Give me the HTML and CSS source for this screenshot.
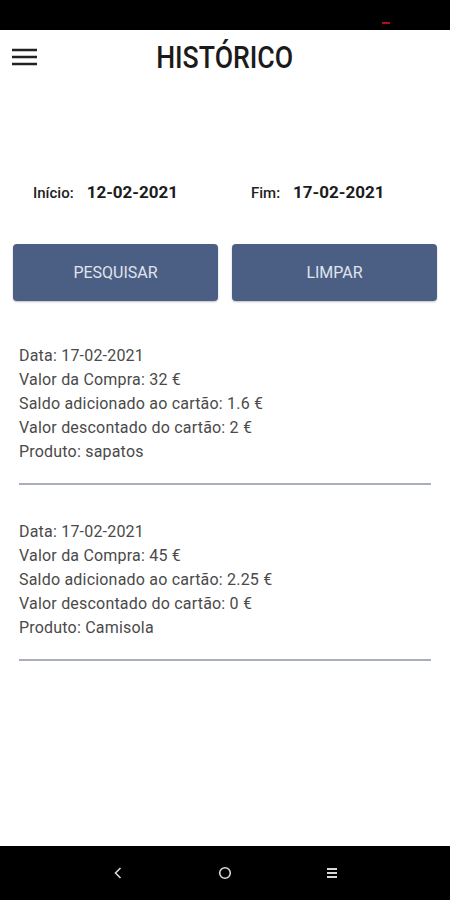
FILE: index.html
```html
<!DOCTYPE html>
<html lang="pt">
<head>
<meta charset="utf-8">
<title>Histórico</title>
<link rel="stylesheet" href="styles.css">
</head>
<body>
<div class="page">
  <div class="status"><span class="status-dot"></span></div>
  <header class="header">
    <button class="menu" aria-label="menu">
      <svg width="26" height="20" viewBox="0 0 26 20"><path d="M0 3h25M0 10h25M0 17h25" stroke="#222" stroke-width="2.6" fill="none"/></svg>
    </button>
    <h1 class="title">HISTÓRICO</h1>
    <span></span>
  </header>
  <main class="main">
    <div class="dates">
      <div class="date-item"><span class="label">Início:</span><span class="value">12-02-2021</span></div>
      <div class="date-item"><span class="label">Fim:</span><span class="value">17-02-2021</span></div>
    </div>
    <div class="buttons">
      <button class="btn">PESQUISAR</button>
      <button class="btn">LIMPAR</button>
    </div>
    <ul class="list">
      <li class="entry">
        <p>Data: 17-02-2021</p>
        <p>Valor da Compra: 32 €</p>
        <p>Saldo adicionado ao cartão: 1.6 €</p>
        <p>Valor descontado do cartão: 2 €</p>
        <p>Produto: sapatos</p>
        <hr class="divider">
      </li>
      <li class="entry">
        <p>Data: 17-02-2021</p>
        <p>Valor da Compra: 45 €</p>
        <p>Saldo adicionado ao cartão: 2.25 €</p>
        <p>Valor descontado do cartão: 0 €</p>
        <p>Produto: Camisola</p>
        <hr class="divider">
      </li>
    </ul>
  </main>
  <nav class="navbar">
    <svg width="12" height="14" viewBox="0 0 12 14"><path d="M8.5 2 3.5 7l5 5" stroke="#d8d8d8" stroke-width="1.6" fill="none"/></svg>
    <svg width="14" height="14" viewBox="0 0 14 14"><circle cx="7" cy="7" r="5.3" stroke="#d8d8d8" stroke-width="1.6" fill="none"/></svg>
    <svg width="12" height="14" viewBox="0 0 12 14"><path d="M1 3h10M1 7h10M1 11h10" stroke="#d8d8d8" stroke-width="1.8" fill="none"/></svg>
  </nav>
</div>
</body>
</html>
```
FILE: styles.css
```css
* { box-sizing: border-box; }
html, body { margin: 0; padding: 0; background: #fff; }
body { font-family: Roboto, "Liberation Sans", sans-serif; }

.page {
  width: 450px;
  height: 900px;
  display: flex;
  flex-direction: column;
}

.status {
  height: 30px;
  background: #000;
  display: flex;
  justify-content: flex-end;
  padding: 22px 60px 0 0;
}
.status-dot {
  width: 8px;
  height: 2px;
  background: #b01010;
}

.header {
  height: 54px;
  display: grid;
  grid-template-columns: 1fr auto 1fr;
  align-items: center;
  padding: 0 12px;
}
.menu {
  border: 0;
  background: none;
  padding: 0;
  width: 26px;
  height: 20px;
  display: flex;
}
.title {
  margin: 0;
  font-family: Roboto, "Liberation Sans", sans-serif;
  font-weight: 500;
  font-size: 31px;
  color: #1b1b1b;
  line-height: 1;
  transform: scaleX(0.86);
}

.main { flex: 1; }

.dates {
  display: grid;
  grid-template-columns: 218px 1fr;
  padding-left: 33px;
  margin-top: 96px;
}
.date-item {
  display: flex;
  gap: 13px;
  align-items: baseline;
  line-height: 24px;
}
.label {
  font-size: 15px;
  font-weight: 500;
  color: #222;
}
.value {
  font-size: 17px;
  font-weight: bold;
  color: #1c1c1c;
}

.buttons {
  display: grid;
  grid-template-columns: 1fr 1fr;
  gap: 14px;
  padding: 0 13px;
  margin-top: 39px;
}
.btn {
  height: 57px;
  border: 0;
  border-radius: 4px;
  background: #4b5f85;
  color: #e0e4ec;
  font-family: Roboto, "Liberation Sans", sans-serif;
  font-size: 16px;
  box-shadow: 0 1px 2px rgba(0,0,0,0.25);
}

.list {
  list-style: none;
  margin: 43px 0 0;
  padding: 0 19px;
}
.entry { margin-bottom: 35px; }
.entry p {
  margin: 0;
  font-size: 16px;
  letter-spacing: 0.2px;
  line-height: 24px;
  color: #4a4a4a;
}
.divider {
  margin: 19px 0 0;
  border: 0;
  height: 2px;
  background: #a8adc2;
}

.navbar {
  height: 54px;
  background: #000;
  display: flex;
  justify-content: center;
  align-items: center;
  gap: 94px;
}
```
